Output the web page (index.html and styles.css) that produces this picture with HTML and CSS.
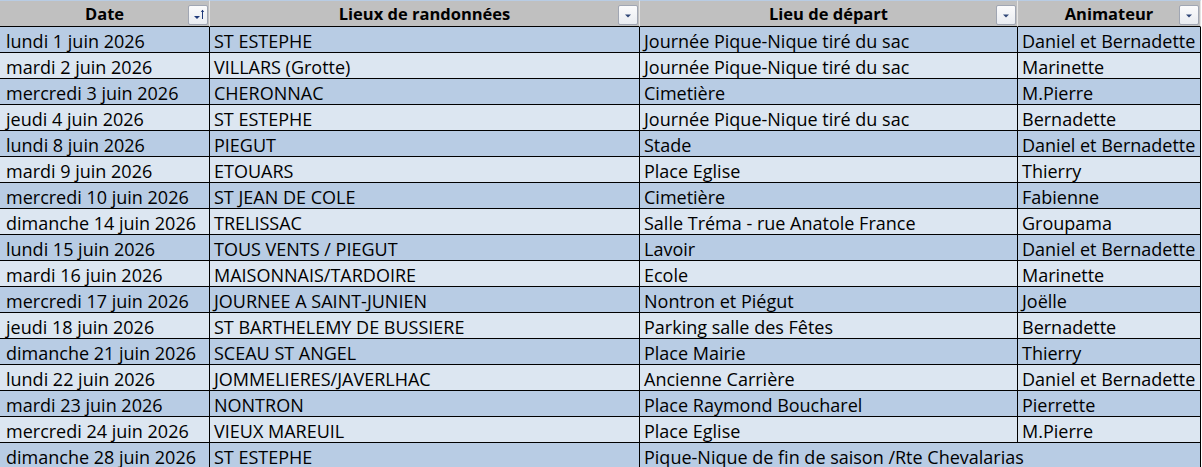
FILE: index.html
```html
<!DOCTYPE html>
<html lang="fr">
<head>
<meta charset="utf-8">
<link rel="stylesheet" href="styles.css">
</head>
<body>
<div class="sheet">
  <div class="hd c1">Date<span class="btn"><svg width="18" height="18" viewBox="0 0 18 18"><path d="M5 10h6l-3 3z" fill="#1f3a7a"/><path d="M13.5 4v9" stroke="#1f3a7a" stroke-width="1"/><path d="M11.8 6l1.7-2.2 1.7 2.2z" fill="#1f3a7a"/></svg></span></div>
  <div class="hd c2">Lieux de randonnées<span class="btn"><svg width="18" height="18" viewBox="0 0 18 18"><path d="M6 8.5h6l-3 3z" fill="#2f4677"/></svg></span></div>
  <div class="hd c3">Lieu de départ<span class="btn"><svg width="18" height="18" viewBox="0 0 18 18"><path d="M6 8.5h6l-3 3z" fill="#2f4677"/></svg></span></div>
  <div class="hd c4">Animateur<span class="btn"><svg width="18" height="18" viewBox="0 0 18 18"><path d="M6 8.5h6l-3 3z" fill="#2f4677"/></svg></span></div>

  <div class="cd c1 a">lundi 1 juin 2026</div><div class="cd c2 a">ST ESTEPHE</div><div class="cd c3 a">Journée Pique-Nique tiré du sac</div><div class="cd c4 a">Daniel et Bernadette</div>
  <div class="cd c1 b">mardi 2 juin 2026</div><div class="cd c2 b">VILLARS (Grotte)</div><div class="cd c3 b">Journée Pique-Nique tiré du sac</div><div class="cd c4 b">Marinette</div>
  <div class="cd c1 a">mercredi 3 juin 2026</div><div class="cd c2 a">CHERONNAC</div><div class="cd c3 a">Cimetière</div><div class="cd c4 a">M.Pierre</div>
  <div class="cd c1 b">jeudi 4 juin 2026</div><div class="cd c2 b">ST ESTEPHE</div><div class="cd c3 b">Journée Pique-Nique tiré du sac</div><div class="cd c4 b">Bernadette</div>
  <div class="cd c1 a">lundi 8 juin 2026</div><div class="cd c2 a">PIEGUT</div><div class="cd c3 a">Stade</div><div class="cd c4 a">Daniel et Bernadette</div>
  <div class="cd c1 b">mardi 9 juin 2026</div><div class="cd c2 b">ETOUARS</div><div class="cd c3 b">Place Eglise</div><div class="cd c4 b">Thierry</div>
  <div class="cd c1 a">mercredi 10 juin 2026</div><div class="cd c2 a">ST JEAN DE COLE</div><div class="cd c3 a">Cimetière</div><div class="cd c4 a">Fabienne</div>
  <div class="cd c1 b">dimanche 14 juin 2026</div><div class="cd c2 b">TRELISSAC</div><div class="cd c3 b">Salle Tréma - rue Anatole France</div><div class="cd c4 b">Groupama</div>
  <div class="cd c1 a">lundi 15 juin 2026</div><div class="cd c2 a">TOUS VENTS / PIEGUT</div><div class="cd c3 a">Lavoir</div><div class="cd c4 a">Daniel et Bernadette</div>
  <div class="cd c1 b">mardi 16 juin 2026</div><div class="cd c2 b">MAISONNAIS/TARDOIRE</div><div class="cd c3 b">Ecole</div><div class="cd c4 b">Marinette</div>
  <div class="cd c1 a">mercredi 17 juin 2026</div><div class="cd c2 a">JOURNEE A SAINT-JUNIEN</div><div class="cd c3 a">Nontron et Piégut</div><div class="cd c4 a">Joëlle</div>
  <div class="cd c1 b">jeudi 18 juin 2026</div><div class="cd c2 b">ST BARTHELEMY DE BUSSIERE</div><div class="cd c3 b">Parking salle des Fêtes</div><div class="cd c4 b">Bernadette</div>
  <div class="cd c1 a">dimanche 21 juin 2026</div><div class="cd c2 a">SCEAU ST ANGEL</div><div class="cd c3 a">Place Mairie</div><div class="cd c4 a">Thierry</div>
  <div class="cd c1 b">lundi 22 juin 2026</div><div class="cd c2 b">JOMMELIERES/JAVERLHAC</div><div class="cd c3 b">Ancienne Carrière</div><div class="cd c4 b">Daniel et Bernadette</div>
  <div class="cd c1 a">mardi 23 juin 2026</div><div class="cd c2 a">NONTRON</div><div class="cd c3 a">Place Raymond Boucharel</div><div class="cd c4 a">Pierrette</div>
  <div class="cd c1 b">mercredi 24 juin 2026</div><div class="cd c2 b">VIEUX MAREUIL</div><div class="cd c3 b">Place Eglise</div><div class="cd c4 b">M.Pierre</div>
  <div class="cd c1 a">dimanche 28 juin 2026</div><div class="cd c2 a">ST ESTEPHE</div><div class="cd c3 a over">Pique-Nique de fin de saison /Rte Chevalarias</div><div class="cd c4 a last"><span class="handle"></span></div>
</div>
</body>
</html>
```
FILE: styles.css
```css
html, body {
  margin: 0;
  padding: 0;
  background: #ffffff;
}
body {
  width: 1202px;
  height: 467px;
  overflow: hidden;
  font-family: "Open Sans", "Liberation Sans", sans-serif;
  font-size: 18px;
  color: #000;
}
.sheet {
  display: grid;
  grid-template-columns: 211px 430px 378px 183px;
  grid-auto-rows: 26px;
  grid-template-rows: 27px;
  margin-left: -1px;
}
.hd {
  position: relative;
  background: #c0c0c0;
  border-top: 1px solid #b8cce4;
  border-bottom: 1px solid #000;
  border-right: 1px solid #e4e4e4;
  box-sizing: border-box;
  font-weight: 700;
  font-size: 16.5px;
  text-align: center;
  line-height: 24px;
  padding-top: 1px;
  white-space: nowrap;
}
.hd.c1 { border-left: 1px solid #c6d6ea; }
.btn {
  position: absolute;
  right: 1px;
  top: 4px;
  width: 18px;
  height: 18px;
  border: 1px solid #a0a6b3;
  border-radius: 2px;
  background: linear-gradient(#fbfbfc, #e9ecf1);
  display: block;
}
.btn svg { display: block; }
.cd {
  box-sizing: border-box;
  border-right: 1px solid #000;
  border-bottom: 1px solid #000;
  padding: 2px 0 0 4px;
  line-height: 24px;
  white-space: nowrap;
  overflow: hidden;
}
.cd.c1 { padding-left: 6px; border-left: 1px solid #c6d6ea; }
.a { background: #b8cce4; }
.b { background: #dce6f1; }
.over { overflow: visible; border-right: none; position: relative; z-index: 1; }
.last { position: relative; overflow: visible; }
.handle {
  position: absolute;
  right: 0;
  bottom: -6px;
  width: 6px;
  height: 7px;
  background: #3b5bb5;
}
```
